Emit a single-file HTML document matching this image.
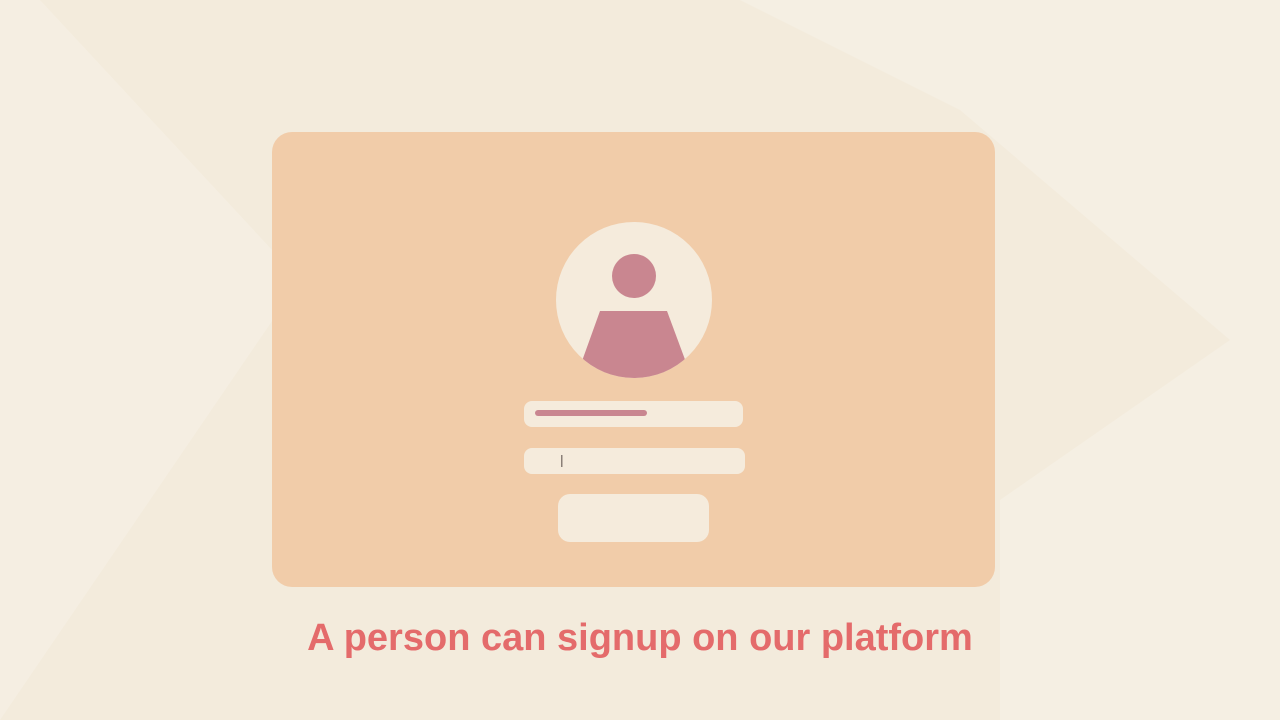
<!DOCTYPE html>
<html><head><style>
html,body{margin:0;padding:0;width:1280px;height:720px;overflow:hidden;background:#f3ebdc;}
.t{position:absolute;left:0;top:617px;width:1280px;text-align:center;font:bold 38px "Liberation Sans",sans-serif;color:#e46b6b;}
</style></head><body>
<svg width="1280" height="720" style="position:absolute;left:0;top:0">
<polygon points="0,0 40,0 300,280 0,720" fill="#f5eee2"/>
<polygon points="740,0 1280,0 1280,720 1000,720 1000,500 1230,340 960,110" fill="#f5efe3"/>
<rect x="272" y="132" width="723" height="455" rx="20" fill="#f1cca9"/>
<clipPath id="c"><circle cx="634" cy="300" r="78"/></clipPath>
<circle cx="634" cy="300" r="78" fill="#f5ebdc"/>
<circle cx="634" cy="276" r="22" fill="#c98690"/>
<polygon points="600,311 667,311 700,400 568,400" fill="#c98690" clip-path="url(#c)"/>
<rect x="524" y="401" width="219" height="26" rx="8" fill="#f5ebdc"/>
<rect x="535" y="410" width="112" height="6" rx="3" fill="#c98690"/>
<rect x="524" y="448" width="221" height="26" rx="8" fill="#f5ebdc"/>
<rect x="561" y="455" width="1.5" height="12" fill="#8a7f77"/>
<rect x="558" y="494" width="151" height="48" rx="12" fill="#f5ebdc"/>
</svg>
<div class="t">A person can signup on our platform</div>
</body></html>
